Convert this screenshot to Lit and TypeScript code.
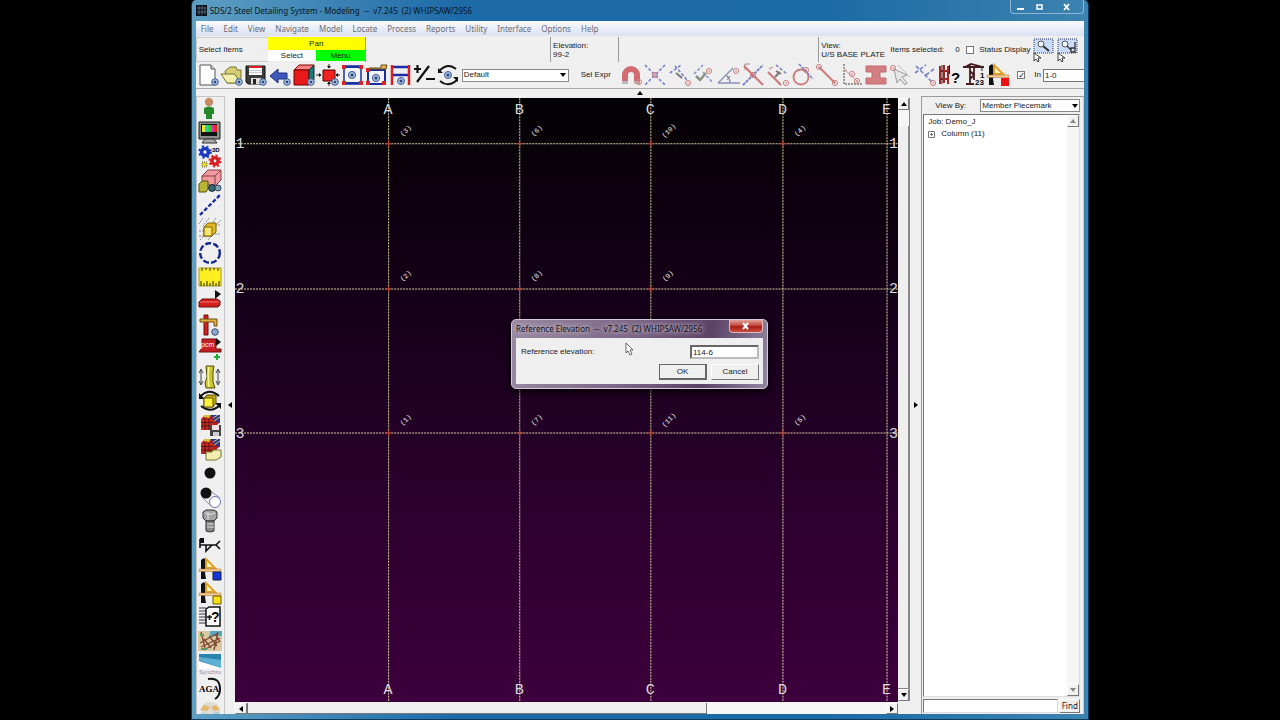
import { LitElement, html, svg, css } from "lit";
import { customElement, property } from "lit/decorators.js";

const eye = svg`<circle cx="19" cy="19" r="3.3" fill="#a9bddd" stroke="#3d5c92"/><circle cx="19" cy="19" r="1.3" fill="#27457f"/>`;
const ring = (x: number, y: number) => svg`<circle cx="${x}" cy="${y}" r="2.6" fill="none" stroke="#cf7f7f"/><circle cx="${x}" cy="${y}" r=".8" fill="#c86a6a"/>`;
const triangle = svg`<path d="M3 22V3l3-2 2 3v8l-1 4 1 6z" fill="#111"/><path d="M8 11V2l9 9z" fill="#fff3d0" stroke="#e2a024" stroke-width="2"/><path d="M1 12h22v2.500H1z" fill="#f0c890" stroke="#a67a3c" stroke-width=".5"/>`;
const brick = svg`<path d="M3 6l4-4h15v7l-6 6H3z" fill="#a51f1f"/><path d="M3 6h12v11H3z" fill="#c22a22"/><path d="M3 9.500h12M3 13h12M7 6v11M11 6v11M7 2.500h8" stroke="#43100e" stroke-width=".8"/><path d="M14 2h8v8l-7-3z" fill="#2534a0"/><path d="M15 5l5-3M16 8l6-4" stroke="#e2cb46"/><path d="M5 4l2-2h6l-2 3z" fill="#d6c13a"/>`;
const curve = svg`<path d="M2 8Q11-2 21 7M22 16Q13 25 3 17" fill="none" stroke="#111" stroke-width="2"/><path d="M1 4v6h6zM23 20v-6h-6z" fill="#111"/>`;

const icons: Record<string, unknown> = {
  page: svg`<path d="M4 2h11l4 4v16H4z" fill="#fff" stroke="#555"/><path d="M15 2v4h4" fill="#ddd" stroke="#555"/>${eye}`,
  open: svg`<path d="M5 8l5-4h6l1 3h4v8l-4 5H7z" fill="#d6d075" stroke="#77732c"/><path d="M1 11h14l5 9H7z" fill="#f2efad" stroke="#77732c"/>${eye}`,
  save: svg`<path d="M2 3h19v18H4l-2-2z" fill="#3a3a3a" stroke="#111"/><path d="M5 3h13v9H5z" fill="#fff"/><path d="M5 3h13v2H5z" fill="#e02020"/><path d="M5 7.500h13M5 9.500h13" stroke="#bbb" stroke-width=".8"/><path d="M7 15h10v6H7z" fill="#ddd"/><path d="M9 16h3v5H9z" fill="#222"/>${eye}`,
  back: svg`<path d="M2 13l8-7v4h9v6h-9v4z" fill="#3c58bd" stroke="#1c2e7c"/>${eye}`,
  cube: svg`<path d="M2 7l5-5h15l-5 5z" fill="#ff8080" stroke="#700"/><path d="M2 7h15v15H2z" fill="#e81919" stroke="#700"/><path d="M17 7l5-5v15l-5 5z" fill="#147a7a" stroke="#222"/>${eye}`,
  fit: svg`<path d="M7 7h12v11H7z" fill="#f02222" stroke="#500"/><path d="M13 1v4M11.500 3l1.500 2 1.500-2M13 23v-4M11.500 21l1.500-2 1.500 2M0 12h5M3 10.500l2 1.500-2 1.500M24 12h-4M22 10.500l-2 1.500 2 1.500" stroke="#111" fill="#111" stroke-width=".9"/>${eye}`,
  frame: svg`<path d="M4 3h17v18H4z" fill="#f4f4fb" stroke="#1730a0" stroke-width="1.500"/><path d="M6 4h13M6 20h13" stroke="#1730a0" stroke-width="2"/><path d="M2 2h4v4H2zM19 2h4v4h-4zM2 18h4v4H2zM19 18h4v4h-4z" fill="#e22222"/><circle cx="12" cy="12" r="3.600" fill="#a9bddd" stroke="#3d5c92"/><circle cx="12" cy="12" r="1.500" fill="#27457f"/>`,
  beam: svg`<path d="M4 7h17v14H4z" fill="#f4f4fb" stroke="#1730a0" stroke-width="2"/><path d="M2 5h4v4H2zM2 18h4v4H2zM18 18h4v4h-4z" fill="#e22222"/><path d="M5 5h12V2h6l-1 4H5z" fill="#dfb75c" stroke="#6c4c10"/><circle cx="12" cy="15" r="3.600" fill="#a9bddd" stroke="#3d5c92"/><circle cx="12" cy="15" r="1.500" fill="#27457f"/>`,
  column: svg`<path d="M4 4h17M4 12h17" stroke="#1d2ca6" stroke-width="2.500"/><path d="M4 2v20M21 2v20" stroke="#d42222" stroke-width="2.500"/><circle cx="13" cy="18" r="3.500" fill="#a9bddd" stroke="#3d5c92"/><circle cx="13" cy="18" r="1.500" fill="#27457f"/>`,
  plusminus: svg`<path d="M2 6h7M5.500 2v8M5 19L17 3M14 16h9" stroke="#111" stroke-width="2.200"/>`,
  rotate: svg`<path d="M3 8Q12-1 20 6M21 17Q12 25 4 18" fill="none" stroke="#111" stroke-width="1.800"/><path d="M2 5v5h5zM22 19v-5h-5z" fill="#111"/><circle cx="12" cy="12" r="3.500" fill="#a9bddd" stroke="#3d5c92"/><circle cx="12" cy="12" r="1.500" fill="#27457f"/>`,
  magnet: svg`<path d="M6 19v-7a6 6 0 0 1 12 0v7" fill="none" stroke="#d06c70" stroke-width="6"/><path d="M3 18h6v3H3zM15 18h6v3h-6z" fill="#b8b8b8"/>${ring(20, 19)}`,
  cross: svg`<path d="M2 2l20 20M22 2L2 22" stroke="#7480c4" stroke-width="1.600" stroke-dasharray="3 2"/>${ring(12, 12)}`,
  perp: svg`<path d="M2 10l11-8M7 3l12 14" stroke="#7480c4" stroke-width="1.600" stroke-dasharray="3 2"/><path d="M8 10l6 5" stroke="#777" stroke-width="2"/>${ring(20, 20)}`,
  offset: svg`<path d="M2 11L11 2M11 9l10 11" stroke="#8d96cc" stroke-width="1.600" stroke-dasharray="3 2"/><path d="M4 13l4 4 6-7" fill="none" stroke="#8a8f86" stroke-width="2.500"/>${ring(17, 8)}`,
  angle: svg`<path d="M1 20L16 5M1 20h22M9 12q4 3 4 8" fill="none" stroke="#8c91b5" stroke-width="1.400"/><path d="M10 13l3 4M13 13l-3 4" stroke="#888"/>${ring(19, 8)}`,
  intersect: svg`<path d="M2 22L22 2" stroke="#7480c4" stroke-width="2" stroke-dasharray="3 1"/><path d="M3 3l19 19" stroke="#ce7979" stroke-width="2.200"/><path d="M4 1h5M4 1v6" stroke="#b08080"/>${ring(12, 12)}`,
  tee: svg`<path d="M2 9l13 13" stroke="#ce7979" stroke-width="2.200"/><path d="M10 2l11 9" stroke="#7480c4" stroke-width="1.500" stroke-dasharray="3 2"/><path d="M9 14l5-5M10 8l5 3" stroke="#777" stroke-width="2"/><path d="M3 6l4-2" stroke="#b77"/>${ring(20, 20)}`,
  tangent: svg`<circle cx="11" cy="14" r="7.500" fill="none" stroke="#ce7979" stroke-width="1.800"/><path d="M9 1l14 15" stroke="#7480c4" stroke-width="1.600" stroke-dasharray="3 1"/>${ring(16, 7)}`,
  ends: svg`<path d="M4 4l16 16" stroke="#ce7979" stroke-width="2"/>${ring(4, 4)}${ring(20, 20)}`,
  axes: svg`<path d="M5 1v20h18" fill="none" stroke="#999" stroke-width="2" stroke-dasharray="2 1"/><path d="M6 7l13 12M4 4l4 4" stroke="#c99"/>${ring(13, 11)}${ring(18, 18)}`,
  ibeam: svg`<path d="M2 3h20v6h-6v6h6v6H2v-6h6V9H2z" fill="#d27f82" stroke="#c26a6e"/>${ring(19, 18)}`,
  hand: svg`<path d="M6 6l3 14 3-4 5 6 2-2-5-6 5-2z" fill="#e6e6e6" stroke="#999"/><path d="M10 2l12 12" stroke="#aaa" stroke-dasharray="2 1"/>${ring(5, 5)}`,
  midpt: svg`<path d="M2 10L13 2M3 3l17 17M13 12l8-6" stroke="#7480c4" stroke-width="1.600" stroke-dasharray="4 2"/>${ring(20, 20)}`,
  barsq: svg`<path d="M3 3v18M7 2v18M11 3v18M2 8h11M2 16h9" stroke="#a12727" stroke-width="2"/><path d="M5 2v19M12.500 2v9" stroke="#222"/><text x="14" y="20" font-size="15" font-weight="700">?</text>`,
  crane: svg`<path d="M1 4h21M3 4l6-3 12 3M8 2v19M12 4v13M8 8l4 4-4 4M4 21h8" fill="none" stroke="#431c20" stroke-width="1.800"/><path d="M20 4v4" stroke="#222"/><text x="18" y="15" font-size="8" font-weight="700">1</text><text x="13" y="22" font-size="8" font-weight="700">23</text>`,
  triRed: svg`${triangle}<path d="M15 15h8v8h-8z" fill="#ee1111"/>`,
  triBlue: svg`${triangle}<path d="M15 15h8v8h-8z" fill="#1634e0" stroke="#123"/>`,
  triYellow: svg`${triangle}<path d="M15 15h8v8h-8z" fill="#ffe112" stroke="#665500"/>`,
  person: svg`<circle cx="11" cy="5" r="4.200" fill="#c68a67"/><path d="M6 11q5-3 10 0v6h-2v5H8v-5H6z" fill="#25882c"/>`,
  monitor: svg`<path d="M1 1h21v17H1z" fill="#8b8f8b" stroke="#222"/><path d="M3 3h16v12H3z" fill="#111"/><path d="M4 4h3v7H4z" fill="#e8e82b"/><path d="M7 4h3v7H7z" fill="#25c9cf"/><path d="M10 4h3v7h-3z" fill="#2fd22f"/><path d="M13 4h3v7h-3z" fill="#e030d0"/><path d="M16 4h3v7h-3z" fill="#e22525"/><path d="M7 18h9l3 4H4z" fill="#aaa" stroke="#333"/>`,
  gears: svg`<circle cx="7" cy="7" r="3.500" fill="none" stroke="#1b3bc4" stroke-width="3.600"/><circle cx="7" cy="7" r="5.800" fill="none" stroke="#1b3bc4" stroke-width="2" stroke-dasharray="2 2.700"/><circle cx="17" cy="16" r="3.200" fill="none" stroke="#d92020" stroke-width="3.600"/><circle cx="17" cy="16" r="5.500" fill="none" stroke="#d92020" stroke-width="2" stroke-dasharray="2 2.300"/><text x="14" y="7" font-size="6" font-weight="700">3D</text><path d="M4 17h5v5H4z" fill="#e8d52c" stroke="#666" stroke-dasharray="1 1"/>`,
  pinkbox: svg`<path d="M4 7l6-6h13v10l-5 5H4z" fill="#ef9ba0" stroke="#8a3b42"/><path d="M4 7h13v9M17 7l6-6" fill="none" stroke="#8a3b42"/><path d="M1 15l3-3h6v8l-2 3H1z" fill="#b7b438" stroke="#55530d"/><circle cx="14" cy="19" r="3.400" fill="#376c72" stroke="#123"/><circle cx="20" cy="19" r="3" fill="#82a1b8" stroke="#346"/>`,
  dashline: svg`<path d="M2 22L22 2" stroke="#1c2c9e" stroke-width="2.400" stroke-dasharray="4 2"/>`,
  boxgrid: svg`<path d="M5 1L1 7M11 1L5 9M18 1l-5 7M23 3l-6 6M1 14h8M1 19h7M14 8h9M17 17h6M2 23l5-5M10 23l3-4" stroke="#888" stroke-dasharray="2 1"/><path d="M6 10l4-4h8v9l-4 4H6z" fill="#e4b91f" stroke="#7c6109"/><path d="M6 10h8v9H6z" fill="#f8e36c" stroke="#7c6109"/>`,
  dashcircle: svg`<circle cx="12" cy="12" r="9.800" fill="none" stroke="#17288f" stroke-width="2.400" stroke-dasharray="6 2.200"/>`,
  ruler: svg`<path d="M1 3h22v18H1z" fill="#ffef20" stroke="#a59a18"/><path d="M3 21v-5M6 21v-3M9 21v-5M12 21v-3M15 21v-5M18 21v-3M21 21v-5M4 3v3M8 3v2M12 3v3M16 3v2M20 3v3" stroke="#222"/>`,
  redbar: svg`<path d="M1 13l3-3h15l3 2v4l-2 2H1z" fill="#d3211f" stroke="#6b0e0d"/><path d="M2 13h19" stroke="#f27775"/><path d="M17 1v9l6-5z" fill="#111"/>`,
  redcol: svg`<path d="M6 2h4v20H6z" fill="#d3211f" stroke="#6b0e0d"/><path d="M2 6h17v7h-3v-4H2z" fill="#dfae45" stroke="#6e4d0d"/><circle cx="17" cy="19" r="3.300" fill="#8aa7d5" stroke="#456"/>`,
  pcm: svg`<path d="M4 2h14v10h5v3H1l3-4z" fill="#c91f22" stroke="#6b0e0d"/><text x="3" y="10" font-size="7" fill="#fff">pcm</text><path d="M18 1v8l5-4z" fill="#111"/><path d="M19 17v6M16 20h6" stroke="#1eae35" stroke-width="2"/>`,
  yelcol: svg`<path d="M8 1h8l-1 6v10l2 6H8l-1-5 2-6z" fill="#cbc52e" stroke="#524e0c"/><path d="M11 2l-1 8 1 12" fill="none" stroke="#fbf89a" stroke-width="1.500"/><path d="M3 5v14M1 8l2-4 2 4M1 16l2 4 2-4M20 5v14M18 8l2-4 2 4M18 16l2 4 2-4" fill="none" stroke="#444"/>`,
  rotcube: svg`${curve}<path d="M6 9l3-3h9v8l-3 4H6z" fill="#c4ab12" stroke="#5d5008"/><path d="M6 9h9v9H6z" fill="#fff13c" stroke="#5d5008"/>`,
  bricksave: svg`${brick}<path d="M12 12h11v11H12z" fill="#444"/><path d="M14 12h7v5h-7z" fill="#f3dcdc"/><path d="M15 19h6v4h-6z" fill="#ccc"/>`,
  brickopen: svg`${brick}<path d="M8 15h6l1-2h8v7l-5 3H8z" fill="#f1edb3" stroke="#77732c"/>`,
  dot: svg`<circle cx="12" cy="12" r="5.500" fill="#111"/>`,
  dothole: svg`<path d="M10 4l12 9M4 12l10 10" stroke="#8f93b8"/><circle cx="8" cy="8" r="5.500" fill="#111"/><circle cx="17" cy="17" r="5.500" fill="#fff" stroke="#6f76ad"/>`,
  bolt: svg`<path d="M5 3l3-2h8l3 2v6l-3 3H8L5 9z" fill="#a3a3a3" stroke="#333"/><path d="M8 12h8v10q-4 2-8 0z" fill="#888" stroke="#333"/><path d="M7 4q5 3 10 0M10 3v8M9 15h7M9 18h7" fill="none" stroke="#e0e0e0"/>`,
  weld: svg`<path d="M2 12h17M2 6v9M8 12v6l6-6M22 8l-4 4 4 4" fill="none" stroke="#111" stroke-width="1.600"/><path d="M2 5h4v5H2z" fill="#111"/>`,
  query: svg`<path d="M1 3h7M1 6h7M1 9h7M1 12h7M1 15h7M1 18h7" stroke="#777" stroke-width="1.500"/><path d="M8 4l3-2h11v19H8z" fill="#fff" stroke="#111" stroke-width="1.500"/><path d="M9 12h5M11.500 10v5" stroke="#111" stroke-width="1.500"/><text x="13" y="17" font-size="14" font-weight="700">?</text>`,
  sketch: svg`<path d="M0 2h24v20H0z" fill="#d9c8a0"/><path d="M12 2h12v5H12z" fill="#59a5bd"/><path d="M2 14L20 4M3 18l19-9M6 21l16-9M6 10l7 9M11 7l8 10M17 5l5 8M3 3l4 16M20 3l-4 18" stroke="#7e4630" stroke-width="1.300"/><path d="M3 20h6M2 6h4" stroke="#5f9863" stroke-width="2"/>`,
  synchro: svg`<path d="M1 1h22v14H1z" fill="#2b83b2"/><path d="M1 4l22 3v8L1 7z" fill="#5fb1d3"/><path d="M1 8l22 7v1H1z" fill="#fff"/><text x="1" y="21" font-size="6" fill="#889">Synchro</text>`,
  aga: svg`<path d="M10 2Q22 0 22 12q0 7-5 10" fill="none" stroke="#111" stroke-width="2"/><text x="1" y="15" font-size="9" font-weight="700" font-family="Liberation Serif, serif">AGA</text>`,
  globe: svg`<path d="M3 9q1-8 9-8 8 0 10 8v8H3z" fill="#dcdcd4"/><path d="M2 9l4-5 6 2-3 4zM22 9l-4-5-5 2 3 4z" fill="#e3b86c"/><path d="M4 12l6 1v5H4zM15 12l6-1v6h-6z" fill="#a5cbdc"/>`,
  lens: svg`<path d="M2 1h19v14H2z" fill="#cbdcf8" stroke="#26355f" stroke-dasharray="1 1"/><circle cx="9" cy="6" r="3" fill="#eef4ff" stroke="#555"/><path d="M11 8l6 5" stroke="#333" stroke-width="2"/><path d="M2 15v8l2-2 2 3 1-1-1-3h3z" fill="#fff" stroke="#111" stroke-width=".8"/>`,
  lenslock: svg`<path d="M2 1h19v14H2z" fill="#cbdcf8" stroke="#26355f" stroke-dasharray="1 1"/><circle cx="9" cy="6" r="3" fill="#eef4ff" stroke="#555"/><path d="M11 8l4 4M15 10h4v4h-4zM19 4v6" fill="none" stroke="#333" stroke-width="1.300"/><path d="M2 15v8l2-2 2 3 1-1-1-3h3z" fill="#fff" stroke="#111" stroke-width=".8"/>`,
};

@customElement("tool-icon")
export class ToolIcon extends LitElement {
  @property() name = "";
  static styles = css`
    :host { display: block; flex: none; }
    button { display: block; width: 24px; height: 24px; padding: 0; border: 0; background: none; }
    svg { display: block; width: 24px; height: 24px; font-family: "Liberation Sans", sans-serif; }
  `;
  render() {
    return html`<button aria-label=${this.name}><svg viewBox="0 0 24 24">${icons[this.name]}</svg></button>`;
  }
}

@customElement("model-view")
export class ModelView extends LitElement {
  static styles = css`
    :host { display: block; min-width: 0; min-height: 0; background: linear-gradient(#030003, #16001a 35%, #2a002c 65%, #3c003c); }
    svg { display: block; width: 100%; height: 100%; }
    .grid { stroke: #d9d0a2; stroke-width: 1; stroke-dasharray: 2 1; }
    .mark { stroke: #b8402c; stroke-width: 1; }
    .axis { fill: #dcdcdc; font: 15px "Liberation Mono", monospace; text-anchor: middle; }
    .tag { fill: #f0f0f0; font: 7px "Liberation Mono", monospace; text-anchor: middle; }
  `;
  render() {
    const columns = [["A", 153], ["B", 284], ["C", 415], ["D", 547], ["E", 651]] as const;
    const rows = [["1", 45], ["2", 190], ["3", 334]] as const;
    const tags = [
      ["(3)", "(6)", "(10)", "(4)"],
      ["(2)", "(8)", "(9)", ""],
      ["(1)", "(7)", "(11)", "(5)"],
    ];
    return html`<svg viewBox="0 0 663 603" preserveAspectRatio="xMidYMid meet">
      ${columns.map(([name, x]) => svg`
        <line class="grid" x1=${x + 0.5} x2=${x + 0.5} y1="0" y2="603"/>
        <text class="axis" x=${x} y="16">${name}</text>
        <text class="axis" x=${x} y="595">${name}</text>`)}
      ${rows.map(([name, y]) => svg`
        <line class="grid" x1="0" x2="663" y1=${y + 0.5} y2=${y + 0.5}/>
        <text class="axis" x="5" y=${y + 5}>${name}</text>
        <text class="axis" x="658" y=${y + 5}>${name}</text>`)}
      ${rows.map(([, y], r) => columns.slice(0, 4).map(([, x], c) => tags[r][c] ? svg`
        <path class="mark" d="M${x - 3} ${y + 0.5}h7M${x + 0.5} ${y - 3}v7"/>
        <text class="tag" transform="translate(${x + (tags[r][c].length > 3 ? 20 : 19)} ${y - 11}) rotate(-45)">${tags[r][c]}</text>` : ""))}
    </svg>`;
  }
}

const arrow = (dir: string) => {
  const paths: Record<string, string> = {
    up: "M1 6h6L4 2z", down: "M1 2h6L4 6z", left: "M6 1v6L2 4z", right: "M2 1v6l4-3z",
  };
  return html`<svg class="arrow" viewBox="0 0 8 8"><path d=${paths[dir]} fill="currentColor"/></svg>`;
};

@customElement("app-root")
export class AppRoot extends LitElement {
  static styles = css`
    * { box-sizing: border-box; }
    :host { display: block; min-height: 100vh; background: #000; color: #1a1a1a; font: 8px/10px "Liberation Sans", sans-serif; }
    button, input, select { font: inherit; color: inherit; margin: 0; border-radius: 0; }
    .window { position: relative; display: flex; flex-direction: column; width: 70.2%; height: 100vh; margin: 0 auto; overflow: hidden;
      padding: 0 4px 5px; background: linear-gradient(90deg, #5f9fc4, #1c6aa8 30%, #1a6aa6 70%, #3c83af); border: 1px solid #0c3a5c; border-top: 0; border-radius: 5px 5px 0 0; }
    .title { display: flex; flex: none; align-items: center; gap: 3px; height: 21px; white-space: pre; font: 8px/12px "Noto Sans", sans-serif; color: #0a1520; }
    .logo { width: 11px; height: 11px; background: #0c1420; }
    .caption { flex: 1; }
    .winbtns { display: flex; align-self: flex-start; height: 14px; border: 1px solid #8db7d2; border-top: 0; border-radius: 0 0 4px 4px; }
    .winbtns button { display: grid; place-items: center; width: 19px; padding: 0; border: 0; background: none; color: #fff; }
    .winbtns button:last-child { width: 34px; }
    .winbtns svg { width: 9px; height: 8px; }
    .client { display: flex; flex-direction: column; flex: 1; min-height: 0; background: #f0eff0; }
    .menu { display: flex; flex: none; align-items: center; gap: 10px; height: 15px; padding-left: 5px; background: linear-gradient(#fafbfe, #dbe1f2); font: 8px/12px "Noto Sans", sans-serif; }
    .menu a { color: #6b6b72; text-decoration: none; }
    .status { display: flex; flex: none; height: 26px; padding-top: 1px; }
    .cell { display: flex; flex-direction: column; justify-content: center; padding-left: 2px; border-left: 1px solid #999; white-space: nowrap; line-height: 9px; overflow: hidden; }
    .prompt { width: 72px; border: 1px solid #ccc; border-right: 0; }
    .wide { flex: 185; }
    .wider { flex: 200; }
    .info { width: 68px; }
    .view { width: 71px; }
    .mode { display: grid; grid-template: 13px 11px / 1fr 1fr; width: 97px; }
    .mode button { padding: 0; border: 0; }
    .pan { grid-column: 1 / 3; background: #ff0; }
    .select { background: #fff; }
    .go { background: #0f0; }
    .picked { display: flex; flex: none; align-items: center; width: 195px; padding-left: 1px; white-space: nowrap; overflow: hidden; }
    .items { width: 65px; }
    .count { width: 11px; }
    .picked label { display: flex; flex: none; align-items: center; gap: 5px; width: 66px; }
    input[type="checkbox"] { appearance: none; display: grid; place-items: center; flex: none; width: 8px; height: 8px; border: 1px solid #777; background: #fff; }
    input[type="checkbox"]:checked::before { content: "✓"; font: bold 8px/8px "DejaVu Sans", sans-serif; color: #000; }
    .tools { display: flex; flex: none; align-items: center; height: 27px; border-bottom: 1px solid #aaa; overflow: hidden; }
    .expr { display: flex; flex: none; align-items: center; gap: 12px; margin: 0 8px 0 2px; }
    .combo { display: grid; grid-template-columns: 1fr 11px; height: 13px; }
    .combo select { grid-area: 1 / 1 / 2 / 3; width: 100%; height: 13px; appearance: none; padding: 0 1px; border: 1px solid #888; background: #fff; }
    .combo .arrow { grid-area: 1 / 2; place-self: center; pointer-events: none; }
    .filter { width: 107px; }
    .arrow { width: 8px; height: 8px; color: #000; }
    .snaps { display: flex; flex: 1; justify-content: space-between; min-width: 0; }
    .scale { display: flex; flex: none; align-items: center; gap: 2px; width: 67px; margin-left: 7px; }
    .scale label { margin-left: 7px; }
    .scale input[type="text"] { flex: 1; min-width: 0; height: 13px; padding: 0 1px; border: 1px solid #777; border-right: 0; }
    .fold { display: grid; place-items: center; flex: none; width: 100%; height: 7px; padding: 0; border: 0; background: none; }
    .work { display: grid; grid-template-columns: 29px 10px 1fr 12px 11px 163px; flex: 1; min-height: 0; }
    .side { overflow: hidden; padding: 0 1px; border: 1px solid #c4c4c4; border-bottom: 0; }
    .group + .group { margin-top: 4px; }
    .split { display: grid; place-items: center; padding: 0; border: 0; background: none; }
    .stage { display: grid; grid-template-rows: 1fr 11px; min-height: 0; min-width: 0; padding-top: 2px; gap: 1px; }
    .vbar, .hbar { display: flex; background: #f6f6f6; }
    .vbar { flex-direction: column; margin: 2px 0 13px; border-right: 1px solid #888; }
    .vbar button, .hbar button, .tree button { display: grid; place-items: center; flex: none; width: 12px; height: 12px; padding: 0; border: 1px solid; border-color: #fff #777 #777 #fff; background: #f2f2f2; }
    .vbar button { width: 11px; }
    .vthumb { flex: 1; margin-top: 16px; border-right: 1px solid #888; border-bottom: 1px solid #888; background: #efefef; }
    .hthumb { width: 69.300%; margin-right: auto; border-left: 1px solid #777; border-right: 1px solid #777; border-bottom: 1px solid #777; background: #efefef; }
    .hbar button, .hbar .hthumb { height: 11px; }
    .panel { display: flex; flex-direction: column; gap: 2px; min-height: 0; padding: 2px 3px 1px 1px; border: 1px solid #999; border-right-color: #ccc; border-bottom: 0; }
    .viewby { display: grid; grid-template-columns: 1fr 100px; align-items: center; height: 13px; padding-left: 12px; }
    .tree { display: flex; flex: 1; min-height: 0; border: 1px solid #888; border-color: #777 #ddd #ddd #777; background: #fff; }
    .nodes { flex: 1; margin: 0; padding: 1px 4px; list-style: none; line-height: 12px; }
    .nodes ul { margin: 0; padding: 0; list-style: none; }
    .nodes li li { display: flex; align-items: center; gap: 6px; }
    .plus { width: 7px; height: 7px; }
    .track { display: flex; flex-direction: column; justify-content: space-between; background: #f5f5f5; }
    .track .arrow { color: #888; }
    .find { display: flex; gap: 1px; height: 14px; }
    .find input { flex: 1; min-width: 0; border: 1px solid; border-color: #777 #ddd #ddd #777; background: #fff; }
    .find button { width: 21px; padding: 0; border: 1px solid; border-color: #fff #777 #777 #fff; background: #efefef; font: 8px/10px "Noto Sans", sans-serif; }
    .dialog { position: absolute; top: 319px; left: calc(50% - 129px); width: 257px; padding: 0 4px 4px; border: 1px solid #d4c9dc; border-radius: 5px; background: linear-gradient(100deg, #9989a2, #7c6786 45%, #5b4267 75%, #9187a0); box-shadow: 0 2px 8px #000; }
    .dhead { display: flex; justify-content: space-between; height: 18px; white-space: pre; font: 8px/17px "Noto Sans", sans-serif; color: #111; text-shadow: 0 0 5px #cfc4d5, 0 0 5px #cfc4d5; }
    .dclose { display: grid; place-items: center; width: 34px; height: 13px; padding: 0; border: 1px solid #e2b8b8; border-top: 0; border-radius: 0 0 4px 4px; background: linear-gradient(#e0a39a, #c44940 45%, #a81d16 55%, #c9503e); }
    .dclose svg { width: 9px; height: 8px; }
    .dbody { display: flex; flex-direction: column; gap: 5px; padding: 6px 3px 2px 4px; height: 46px; border: 1px solid #eee; background: #f0eff0; }
    .field { display: flex; justify-content: space-between; align-items: center; }
    .field input { width: 69px; height: 14px; padding: 0 1px; border: 2px solid; border-color: #666 #bbb #bbb #666; background: #fff; outline: 0; }
    .actions { display: flex; justify-content: flex-end; gap: 4px; }
    .actions button { width: 48px; height: 16px; padding: 0; border: 1px solid; border-color: #fff #777 #777 #fff; background: #f0eff0; }
    .actions .ok { border: 1px solid #666; border-right-width: 2px; border-bottom-width: 2px; }
    .pointer { position: absolute; top: 342px; left: calc(50% - 15px); width: 9px; height: 14px; }
  `;

  firstUpdated() {
    const field = this.renderRoot.querySelector<HTMLInputElement>("#elev");
    field?.focus();
    field?.setSelectionRange(5, 5);
  }

  render() {
    const menus = ["File", "Edit", "View", "Navigate", "Model", "Locate", "Process", "Reports", "Utility", "Interface", "Options", "Help"];
    const files = ["page", "open", "save", "back", "cube", "fit", "frame", "beam", "column", "plusminus", "rotate"];
    const snaps = ["magnet", "cross", "perp", "offset", "angle", "intersect", "tee", "tangent", "ends", "axes", "ibeam", "hand", "midpt", "barsq", "crane", "triRed"];
    const side = [
      ["person", "monitor", "gears", "pinkbox", "dashline", "boxgrid", "dashcircle", "ruler", "redbar", "redcol", "pcm"],
      ["yelcol", "rotcube", "bricksave", "brickopen", "dot", "dothole", "bolt", "weld", "triBlue", "triYellow", "query", "sketch", "synchro", "aga", "globe"],
    ];
    const tool = (n: string) => html`<tool-icon name=${n}></tool-icon>`;
    return html`
      <div class="window">
        <header class="title">
          <svg class="logo" viewBox="0 0 11 11"><path d="M1 3h9M1 7h9M3 1v9M6 1v9M9 2v7" stroke="#6b7c94" stroke-width=".7"/></svg>
          <span class="caption">SDS/2 Steel Detailing System - Modeling  --  v7.245  (2) WHIPSAW/2956</span>
          <div class="winbtns">
            <button aria-label="Minimize"><svg viewBox="0 0 9 8"><path d="M1 5h7v2H1z" fill="#fff"/></svg></button>
            <button aria-label="Maximize"><svg viewBox="0 0 9 8"><path d="M2 2h5v4H2z" fill="none" stroke="#fff" stroke-width="1.500"/></svg></button>
            <button aria-label="Close"><svg viewBox="0 0 9 8"><path d="M2 1l5 6M7 1L2 7" stroke="#fff" stroke-width="1.800"/></svg></button>
          </div>
        </header>
        <div class="client">
          <nav class="menu">${menus.map((m) => html`<a href="#">${m}</a>`)}</nav>
          <div class="status">
            <div class="cell prompt">Select Items</div>
            <div class="mode"><button class="pan">Pan</button><button class="select">Select</button><button class="go">Menu</button></div>
            <div class="cell wide"></div>
            <div class="cell info"><span>Elevation:</span><span>99-2</span></div>
            <div class="cell wider"></div>
            <div class="cell view"><span>View:</span><span>U/S BASE PLATE</span></div>
            <div class="picked">
              <span class="items">Items selected:</span><span class="count">0</span>
              <label><input type="checkbox">Status Display</label>
              ${tool("lens")}${tool("lenslock")}
            </div>
          </div>
          <div class="tools">
            ${files.map(tool)}
            <div class="expr">
              <span class="combo filter"><select aria-label="Display filter"><option>Default</option></select>${arrow("down")}</span>
              <span>Sel Expr</span>
            </div>
            <div class="snaps">${snaps.map(tool)}</div>
            <div class="scale">
              <input type="checkbox" aria-label="Use increment" checked>
              <label for="inc">In</label><input id="inc" type="text" value="1-0">
            </div>
          </div>
          <button class="fold" aria-label="Collapse toolbar">${arrow("up")}</button>
          <main class="work">
            <aside class="side">${side.map((g) => html`<div class="group">${g.map(tool)}</div>`)}</aside>
            <button class="split" aria-label="Collapse left">${arrow("left")}</button>
            <section class="stage">
              <model-view></model-view>
              <div class="hbar"><button aria-label="Scroll left">${arrow("left")}</button><div class="hthumb"></div><button aria-label="Scroll right">${arrow("right")}</button></div>
            </section>
            <div class="vbar"><button aria-label="Scroll up">${arrow("up")}</button><div class="vthumb"></div><button aria-label="Scroll down">${arrow("down")}</button></div>
            <button class="split" aria-label="Collapse right">${arrow("right")}</button>
            <aside class="panel">
              <div class="viewby"><label for="by">View By:</label><span class="combo"><select id="by"><option>Member Piecemark</option></select>${arrow("down")}</span></div>
              <div class="tree">
                <ul class="nodes"><li>Job: Demo_J<ul><li><svg class="plus" viewBox="0 0 7 7"><path d="M.5.5h6v6h-6zM2 3.500h3M3.500 2v3" fill="none" stroke="#777"/></svg>Column (11)</li></ul></li></ul>
                <div class="track"><button aria-label="Tree up">${arrow("up")}</button><button aria-label="Tree down">${arrow("down")}</button></div>
              </div>
              <div class="find"><input type="text" aria-label="Find text"><button>Find</button></div>
            </aside>
          </main>
        </div>
        <section class="dialog" role="dialog" aria-label="Reference Elevation">
          <div class="dhead"><span>Reference Elevation  --  v7.245  (2) WHIPSAW/2956</span><button class="dclose" aria-label="Close dialog"><svg viewBox="0 0 9 8"><path d="M2 1l5 6M7 1L2 7" stroke="#fff" stroke-width="2"/></svg></button></div>
          <div class="dbody">
            <div class="field"><label for="elev">Reference elevation:</label><input id="elev" type="text" value="114-6"></div>
            <div class="actions"><button class="ok">OK</button><button>Cancel</button></div>
          </div>
        </section>
        <svg class="pointer" viewBox="0 0 9 14"><path d="M1 1v10l2-2 2 4 2-1-2-4h3z" fill="#fff" stroke="#444" stroke-width=".8"/></svg>
      </div>`;
  }
}
